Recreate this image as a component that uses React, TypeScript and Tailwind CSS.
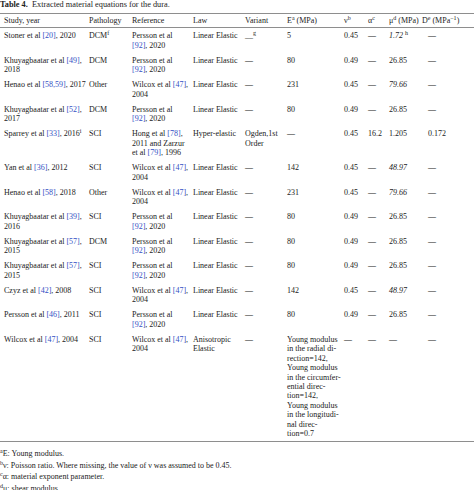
import type { ReactNode } from 'react';

type Row = {
  study: ReactNode;
  pathology: ReactNode;
  reference: ReactNode;
  law: ReactNode;
  variant: ReactNode;
  e: ReactNode;
  nu: ReactNode;
  alpha: ReactNode;
  mu: ReactNode;
  d: ReactNode;
};

function Ref({ children }: { children: ReactNode }) {
  return <span className="text-[#3350c4]">{children}</span>;
}

const persson = (
  <>
    Persson et al
    <br />
    <Ref>[92]</Ref>, 2020
  </>
);

const wilcox = (
  <>
    Wilcox et al <Ref>[47]</Ref>,
    <br />
    2004
  </>
);

const rows: Row[] = [
  {
    study: <>Stoner et al <Ref>[20]</Ref>, 2020</>,
    pathology: <>DCM<sup>f</sup></>,
    reference: persson,
    law: 'Linear Elastic',
    variant: <>__<sup>g</sup></>,
    e: '5',
    nu: '0.45',
    alpha: '—',
    mu: <><i>1.72</i> <sup>h</sup></>,
    d: '—',
  },
  {
    study: <>Khuyagbaatar et al <Ref>[49]</Ref>,<br />2018</>,
    pathology: 'DCM',
    reference: persson,
    law: 'Linear Elastic',
    variant: '—',
    e: '80',
    nu: '0.49',
    alpha: '—',
    mu: '26.85',
    d: '—',
  },
  {
    study: <>Henao et al <Ref>[58,59]</Ref>, 2017</>,
    pathology: 'Other',
    reference: wilcox,
    law: 'Linear Elastic',
    variant: '—',
    e: '231',
    nu: '0.45',
    alpha: '—',
    mu: <i>79.66</i>,
    d: '—',
  },
  {
    study: <>Khuyagbaatar et al <Ref>[52]</Ref>,<br />2017</>,
    pathology: 'DCM',
    reference: persson,
    law: 'Linear Elastic',
    variant: '—',
    e: '80',
    nu: '0.49',
    alpha: '—',
    mu: '26.85',
    d: '—',
  },
  {
    study: <>Sparrey et al <Ref>[33]</Ref>, 2016<sup>i</sup></>,
    pathology: 'SCI',
    reference: (
      <>
        Hong et al <Ref>[78]</Ref>,<br />
        2011 and Zarzur
        <br />
        et al <Ref>[79]</Ref>, 1996
      </>
    ),
    law: 'Hyper-elastic',
    variant: <>Ogden,1st<br />Order</>,
    e: '—',
    nu: '0.45',
    alpha: '16.2',
    mu: '1.205',
    d: '0.172',
  },
  {
    study: <>Yan et al <Ref>[36]</Ref>, 2012</>,
    pathology: 'SCI',
    reference: wilcox,
    law: 'Linear Elastic',
    variant: '—',
    e: '142',
    nu: '0.45',
    alpha: '—',
    mu: <i>48.97</i>,
    d: '—',
  },
  {
    study: <>Henao et al <Ref>[58]</Ref>, 2018</>,
    pathology: 'Other',
    reference: wilcox,
    law: 'Linear Elastic',
    variant: '—',
    e: '231',
    nu: '0.45',
    alpha: '—',
    mu: <i>79.66</i>,
    d: '—',
  },
  {
    study: <>Khuyagbaatar et al <Ref>[39]</Ref>,<br />2016</>,
    pathology: 'SCI',
    reference: persson,
    law: 'Linear Elastic',
    variant: '—',
    e: '80',
    nu: '0.49',
    alpha: '—',
    mu: '26.85',
    d: '—',
  },
  {
    study: <>Khuyagbaatar et al <Ref>[57]</Ref>,<br />2015</>,
    pathology: 'DCM',
    reference: persson,
    law: 'Linear Elastic',
    variant: '—',
    e: '80',
    nu: '0.49',
    alpha: '—',
    mu: '26.85',
    d: '—',
  },
  {
    study: <>Khuyagbaatar et al <Ref>[57]</Ref>,<br />2015</>,
    pathology: 'SCI',
    reference: persson,
    law: 'Linear Elastic',
    variant: '—',
    e: '80',
    nu: '0.49',
    alpha: '—',
    mu: '26.85',
    d: '—',
  },
  {
    study: <>Czyz et al <Ref>[42]</Ref>, 2008</>,
    pathology: 'SCI',
    reference: wilcox,
    law: 'Linear Elastic',
    variant: '—',
    e: '142',
    nu: '0.45',
    alpha: '—',
    mu: <i>48.97</i>,
    d: '—',
  },
  {
    study: <>Persson et al <Ref>[46]</Ref>, 2011</>,
    pathology: 'SCI',
    reference: persson,
    law: 'Linear Elastic',
    variant: '—',
    e: '80',
    nu: '0.49',
    alpha: '—',
    mu: '26.85',
    d: '—',
  },
  {
    study: <>Wilcox et al <Ref>[47]</Ref>, 2004</>,
    pathology: 'SCI',
    reference: wilcox,
    law: <>Anisotropic<br />Elastic</>,
    variant: '—',
    e: (
      <>
        Young modulus<br />
        in the radial di-<br />
        rection=142,<br />
        Young modulus<br />
        in the circumfer-<br />
        ential direc-<br />
        tion=142,<br />
        Young modulus<br />
        in the longitudi-<br />
        nal direc-<br />
        tion=0.7
      </>
    ),
    nu: '—',
    alpha: '—',
    mu: '—',
    d: '—',
  },
];

const td = 'pl-[4px] py-[2.8px] align-top whitespace-nowrap';
const th = 'pl-[4px] py-[2px] text-left font-normal align-top whitespace-nowrap';

export default function App() {
  return (
    <div className="w-[474px] bg-white text-[#222] font-['Liberation_Serif',serif] text-[8px] leading-[9.45px]">
      <p className="text-[8.3px] leading-[10px] mb-[3px]">
        <b>Table 4.</b>&nbsp; Extracted material equations for the dura.
      </p>

      <table className="w-full table-fixed border-collapse">
        <colgroup>
          <col className="w-[85px]" />
          <col className="w-[43px]" />
          <col className="w-[61px]" />
          <col className="w-[52px]" />
          <col className="w-[42px]" />
          <col className="w-[57px]" />
          <col className="w-[24px]" />
          <col className="w-[21px]" />
          <col className="w-[33px]" />
          <col />
        </colgroup>
        <thead>
          <tr className="border-y-[1.5px] border-[#8e8e8e]">
            <th className={th}>Study, year</th>
            <th className={th}>Pathology</th>
            <th className={th}>Reference</th>
            <th className={th}>Law</th>
            <th className={th}>Variant</th>
            <th className={th}>E<sup>a</sup> (MPa)</th>
            <th className={th}>ν<sup>b</sup></th>
            <th className={th}>α<sup>c</sup></th>
            <th className={th}>μ<sup>d</sup> (MPa)</th>
            <th className={th}>D<sup>e</sup> (MPa<sup>−1</sup>)</th>
          </tr>
        </thead>
        <tbody className="border-b-[1.5px] border-[#8e8e8e]">
          {rows.map((r, i) => (
            <tr key={i}>
              <td className={td}>{r.study}</td>
              <td className={td}>{r.pathology}</td>
              <td className={td}>{r.reference}</td>
              <td className={td}>{r.law}</td>
              <td className={td}>{r.variant}</td>
              <td className={td}>{r.e}</td>
              <td className={td}>{r.nu}</td>
              <td className={td}>{r.alpha}</td>
              <td className={td}>{r.mu}</td>
              <td className={`${td} pl-[10px]`}>{r.d}</td>
            </tr>
          ))}
        </tbody>
      </table>

      <div className="mt-[6px] leading-[11.5px]">
        <p><sup>a</sup>E: Young modulus.</p>
        <p><sup>b</sup>ν: Poisson ratio. Where missing, the value of ν was assumed to be 0.45.</p>
        <p><sup>c</sup>α: material exponent parameter.</p>
        <p><sup>d</sup>μ: shear modulus.</p>
      </div>
    </div>
  );
}
